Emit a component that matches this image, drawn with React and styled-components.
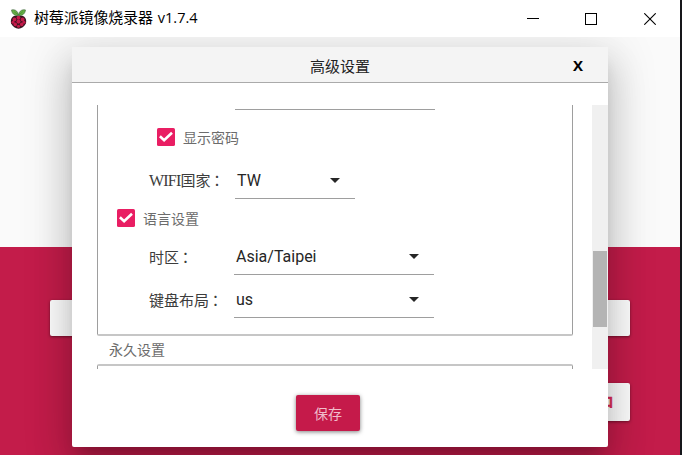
import React from 'react';
import styled, { createGlobalStyle } from 'styled-components';

const GlobalStyle = createGlobalStyle`
  * { box-sizing: border-box; }
  body { margin: 0; overflow: hidden; background: #16161a; }
`;

const cjk = `'Noto Sans CJK SC', sans-serif`;

const Window = styled.div`
  width: 680px;
  height: 455px;
  display: flex;
  flex-direction: column;
  overflow: hidden;
  font-family: ${cjk};
`;

const TitleBar = styled.header`
  position: relative;
  z-index: 2;
  height: 37px;
  flex: none;
  display: flex;
  align-items: center;
  padding-left: 10px;
  background: #fff;
`;

const Title = styled.span`
  margin: -2px 0 0 7px;
  font: 15px/20px ${cjk};
  letter-spacing: -0.15px;
  color: #000;
  white-space: nowrap;
`;

const Version = styled.span`
  margin-left: 5px;
  font: 14.5px/20px 'Open Sans', sans-serif;
  letter-spacing: 0;
`;

const WindowControls = styled.div`
  margin-left: auto;
  display: flex;
  gap: 46px;
  padding-right: 24px;
  svg { display: block; }
  svg:last-child { margin-left: 1px; }
`;

const Stage = styled.main`
  position: relative;
  flex: 1;
  display: flex;
  flex-direction: column;
  background: #fafafa;
`;

const LogoArea = styled.div`
  height: 210px;
  flex: none;
`;

const ActionArea = styled.div`
  flex: 1;
  display: flex;
  flex-direction: column;
  gap: 47px;
  padding: 53px 50px 0;
  background: #c31c4a;
`;

const ActionRow = styled.div`
  display: flex;
  justify-content: ${(p) => (p.$end ? 'flex-end' : 'space-between')};
`;

const ActionButton = styled.button`
  width: 120px;
  height: ${(p) => p.$height || 36}px;
  padding: 0 17px 0 0;
  border: 0;
  border-radius: 2px;
  background: #fff;
  color: #dc2858;
  font: bold 12px/36px ${cjk};
  -webkit-text-stroke: 0.7px #dc2858;
  text-align: right;
  box-shadow: 0 1px 3px rgba(0, 0, 0, 0.45);
`;

const Dialog = styled.section`
  position: absolute;
  left: 72px;
  top: 10px;
  width: 536px;
  height: 400px;
  display: flex;
  flex-direction: column;
  background: #fff;
  border-radius: 0 0 2px 2px;
  box-shadow: 0 11px 15px -7px rgba(0, 0, 0, 0.2), 0 24px 38px 3px rgba(0, 0, 0, 0.14),
    0 9px 46px 8px rgba(0, 0, 0, 0.12);
`;

const DialogHeader = styled.div`
  height: 36px;
  flex: none;
  display: grid;
  grid-template-columns: 60px 1fr 60px;
  align-items: center;
  background: #f4f4f4;
  border-bottom: 1px solid #aaa;
  font: 15px/20px ${cjk};
  color: #222;
  text-align: center;
`;

const DialogTitle = styled.span`
  grid-column: 2;
  padding-top: 2px;
`;

const CloseButton = styled.span`
  font: bold 15px/20px 'Open Sans', sans-serif;
  color: #000;
`;

const ScrollArea = styled.div`
  height: 264px;
  flex: none;
  display: flex;
  justify-content: space-between;
  margin: 22px 0 0 25px;
  overflow: hidden;
`;

const ScrollTrack = styled.div`
  width: 16px;
  padding: 146px 1px 0;
  background: #f0f0f0;
`;

const ScrollThumb = styled.div`
  height: 76px;
  background: #b4b4b4;
`;

const Groups = styled.div`
  width: 476px;
`;

const Group = styled.div`
  height: ${(p) => p.$height}px;
  border: 1px solid #9e9e9e;
  border-top: ${(p) => (p.$openTop ? '0' : '2px solid #c6c6c6')};
  border-bottom: ${(p) => (p.$openTop ? '2px solid #c6c6c6' : '0')};
  border-radius: ${(p) => (p.$openTop ? '0 0 2px 2px' : '2px 2px 0 0')};
`;

const GroupLabel = styled.div`
  height: 28px;
  padding-left: 12px;
  font: 14px/26px ${cjk};
  color: #6c6c6c;
`;

const PasswordLine = styled.div`
  width: 200px;
  height: 5px;
  margin-left: 137px;
  border-bottom: 1px solid #9e9e9e;
`;

const CheckRow = styled.label`
  height: ${(p) => p.$height}px;
  margin: ${(p) => p.$top}px 0 0 ${(p) => p.$indent}px;
  display: flex;
  align-items: center;
  gap: 8px;
  font: 14px/20px ${cjk};
  color: #6c6c6c;
`;

const CheckText = styled.span`
  padding-bottom: 1px;
`;

const Field = styled.div`
  display: flex;
  height: ${(p) => p.$height}px;
  padding-left: 51px;
`;

const FieldLabel = styled.span`
  width: ${(p) => p.$width}px;
  align-self: flex-end;
  padding-bottom: 8px;
  font: 15px/20px ${cjk};
  color: #3c3c3c;
  white-space: nowrap;
`;

const Latin = styled.span`
  font-family: 'Liberation Serif', serif;
  font-size: 16px;
  letter-spacing: -0.8px;
`;

const Colon = styled.span`
  margin-left: -1px;
  font-family: 'Noto Sans CJK TC', sans-serif;
`;

const Select = styled.div`
  width: ${(p) => p.$width}px;
  display: flex;
  align-items: flex-end;
  justify-content: space-between;
  padding: 0 15px 8px 2px;
  border-bottom: 1px solid #9e9e9e;
  font: 16px/19px 'Roboto', sans-serif;
  color: #262626;
  svg { margin-bottom: 7px; }
`;

const DialogFooter = styled.div`
  flex: 1;
  display: flex;
  justify-content: center;
  padding: 26px 24px 0 0;
`;

const SaveButton = styled.button`
  width: 64px;
  height: 36px;
  padding: 0;
  border: 0;
  border-radius: 2px;
  background: #c51a4a;
  color: #f0bdca;
  font: 14px/36px ${cjk};
  box-shadow: 0 1px 4px rgba(0, 0, 0, 0.5);
`;

const berries = [
  [9, 9.3, 2.1], [4.7, 11, 2], [13.3, 11, 2], [9, 13.2, 2.2], [3.2, 14, 1.6],
  [14.8, 14, 1.6], [5.6, 16.2, 1.9], [12.4, 16.2, 1.9], [9, 18.2, 1.6],
];

const RaspberryIcon = () => (
  <svg width="17" height="20" viewBox="0 0 18 21" preserveAspectRatio="none">
    <path d="M3.2 8C.8 10 .4 13 1.2 15.2 2.6 18.4 6 20.6 9 20.8c3-.2 6.4-2.4 7.8-5.6.8-2.2.4-5.2-2-7.2C12.4 6.6 5.6 6.6 3.2 8Z" fill="#3a1420" />
    {berries.map(([x, y, r]) => (
      <circle key={`${x}-${y}`} cx={x} cy={y} r={r} fill="#c51a4a" />
    ))}
    <path d="M8.8 6.8C5 7.4 2 5 1.6 1c3-.9 6.6.6 7.4 5.2C9.8 1.6 13.4.1 16.4 1 16 5 13 7.4 9.2 6.8Z" fill="#65b045" stroke="#3a5a3a" strokeWidth=".6" />
    <path d="M4.6 3 8.5 6M13.4 3 9.5 6" stroke="#3d7030" strokeWidth=".5" />
  </svg>
);

const Checkbox = () => (
  <svg width="18" height="18" viewBox="0 0 18 18">
    <rect width="18" height="18" rx="1.6" fill="#e91e63" />
    <path d="m2.9 8.3 4.2 4L15 4.8" fill="none" stroke="#fff" strokeWidth="2.6" />
  </svg>
);

const Arrow = () => (
  <svg width="10" height="5" viewBox="0 0 10 5">
    <path d="M0 0h10L5 5Z" fill="#262626" />
  </svg>
);

const SelectField = ({ label, value, height, labelWidth, width }) => (
  <Field $height={height}>
    <FieldLabel $width={labelWidth}>
      {label}
      <Colon>：</Colon>
    </FieldLabel>
    <Select $width={width}>
      {value}
      <Arrow />
    </Select>
  </Field>
);

export default function App() {
  return (
    <>
      <GlobalStyle />
      <Window>
        <TitleBar>
          <RaspberryIcon />
          <Title>
            树莓派镜像烧录器<Version>v1.7.4</Version>
          </Title>
          <WindowControls>
            <svg width="12" height="12" shapeRendering="crispEdges"><path d="M0 5.5h12" stroke="#000" /></svg>
            <svg width="12" height="12" shapeRendering="crispEdges"><path d="M.5.5h11v11H.5Z" fill="none" stroke="#000" /></svg>
            <svg width="12" height="12"><path d="m.3.3 11.4 11.4M11.7.3.3 11.7" stroke="#000" strokeWidth="1.1" /></svg>
          </WindowControls>
        </TitleBar>
        <Stage>
          <LogoArea />
          <ActionArea>
            <ActionRow>
              <ActionButton />
              <ActionButton />
            </ActionRow>
            <ActionRow $end>
              <ActionButton $height={38}>口</ActionButton>
            </ActionRow>
          </ActionArea>
          <Dialog>
            <DialogHeader>
              <DialogTitle>高级设置</DialogTitle>
              <CloseButton>X</CloseButton>
            </DialogHeader>
            <ScrollArea>
              <Groups>
                <Group $openTop $height={231}>
                  <PasswordLine />
                  <CheckRow $top={18} $height={18} $indent={59}>
                    <Checkbox />
                    <CheckText>显示密码</CheckText>
                  </CheckRow>
                  <SelectField
                    label={<><Latin>WIFI</Latin>国家</>}
                    value="TW"
                    height={53}
                    labelWidth={86}
                    width={120}
                  />
                  <CheckRow $top={10} $height={18} $indent={19}>
                    <Checkbox />
                    <CheckText>语言设置</CheckText>
                  </CheckRow>
                  <SelectField label="时区" value="Asia/Taipei" height={48} labelWidth={85} width={200} />
                  <SelectField label="键盘布局" value="us" height={43} labelWidth={85} width={200} />
                </Group>
                <GroupLabel>永久设置</GroupLabel>
                <Group $height={60} />
              </Groups>
              <ScrollTrack>
                <ScrollThumb />
              </ScrollTrack>
            </ScrollArea>
            <DialogFooter>
              <SaveButton>保存</SaveButton>
            </DialogFooter>
          </Dialog>
        </Stage>
      </Window>
    </>
  );
}
